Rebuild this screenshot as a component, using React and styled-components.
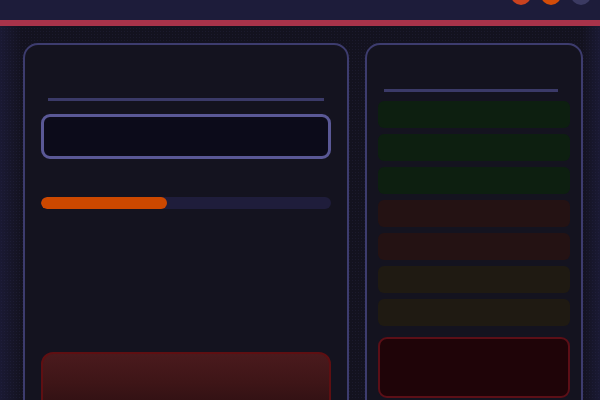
import React from "react";
import styled, { createGlobalStyle } from "styled-components";

const GlobalStyle = createGlobalStyle`
  * { box-sizing: border-box; }
  html, body {
    margin: 0;
    padding: 0;
    height: 100%;
    overflow: hidden;
    background: #13121f;
    font-family: "Inter", "Liberation Sans", sans-serif;
  }
`;

const dots = [1, 2, 3, 4, 5, 6, 7];

// 대시보드 화면
const App = () => {
  return (
    <>
      <GlobalStyle />
      <Page>
        <Header>
          <Lights>
            <Light color="#c9421f" />
            <Light color="#d24c08" />
            <Light color="#3b3a62" />
          </Lights>
        </Header>
        <Main>
          <LeftPanel>
            <Rule />
            <Input />
            <Progress>
              <ProgressFill style={{ width: "43.5%" }} />
            </Progress>
            <DangerButton />
          </LeftPanel>
          <RightPanel>
            <SideRule />
            <Rows>
              {dots.map((n) => (
                <Row key={n} tone={n <= 3 ? "green" : n <= 5 ? "red" : "olive"} />
              ))}
            </Rows>
            <AlertBox />
          </RightPanel>
        </Main>
      </Page>
    </>
  );
};

const Page = styled.div`
  width: 600px;
  height: 400px;
  overflow: hidden;
  background-color: #13121f;
  background-image:
    linear-gradient(90deg, rgba(40, 40, 90, 0.35) 0px, rgba(40, 40, 90, 0) 22px),
    linear-gradient(270deg, rgba(40, 40, 90, 0.35) 0px, rgba(40, 40, 90, 0) 18px),
    radial-gradient(rgba(60, 60, 110, 0.18) 1px, transparent 1px);
  background-size: auto, auto, 3px 3px;
`;

const Header = styled.header`
  height: 26px;
  background: #1d1c3a;
  border-bottom: 6px solid #a8334a;
  overflow: hidden;
`;

const Lights = styled.div`
  display: flex;
  justify-content: flex-end;
  gap: 10px;
  padding-right: 9px;
  margin-top: -15px;
`;

const Light = styled.span`
  width: 20px;
  height: 20px;
  border-radius: 50%;
  background: ${(p) => p.color};
`;

const Main = styled.main`
  display: flex;
  gap: 16px;
  padding: 17px 17px 0 23px;
  align-items: flex-start;
`;

const Panel = styled.section`
  display: flex;
  flex-direction: column;
  height: 380px;
  border: 2px solid #3d3c6e;
  border-radius: 15px;
  background: #14131f;
`;

const LeftPanel = styled(Panel)`
  width: 326px;
  padding: 53px 16px 0;
`;

const RightPanel = styled(Panel)`
  width: 218px;
  padding: 44px 11px 0;
`;

const Rule = styled.div`
  height: 3px;
  margin: 0 7px;
  background: #3b3a68;
`;

const Input = styled.div`
  height: 45px;
  margin-top: 13px;
  border: 3px solid #5a5896;
  border-radius: 9px;
  background: #0c0b1a;
`;

const Progress = styled.div`
  height: 12px;
  margin-top: 38px;
  border-radius: 6px;
  background: #1f1d3b;
  overflow: hidden;
`;

const ProgressFill = styled.div`
  height: 100%;
  border-radius: 6px;
  background: #cc4800;
`;

const DangerButton = styled.div`
  height: 62px;
  margin-top: 143px;
  border: 2px solid #5e0f12;
  border-radius: 12px;
  background: linear-gradient(180deg, #4a1a1d 0%, #3e1517 50%, #2c0f12 100%);
`;

const SideRule = styled.div`
  width: 174px;
  height: 3px;
  margin-left: 6px;
  background: #3b3a68;
`;

const Rows = styled.div`
  display: flex;
  flex-direction: column;
  gap: 6px;
  margin-top: 9px;
`;

const toneColors = {
  green: "#0d1f10",
  red: "#241213",
  olive: "#1f1a12",
};

const Row = styled.div`
  height: 27px;
  border-radius: 6px;
  background: ${(p) => toneColors[p.tone]};
`;

const AlertBox = styled.div`
  height: 61px;
  margin-top: 11px;
  border: 2px solid #5c0f17;
  border-radius: 9px;
  background: #1f0408;
`;

export default App;
